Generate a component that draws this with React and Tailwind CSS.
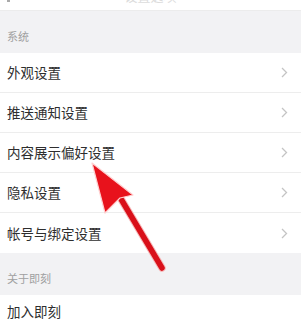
import React from "react";

const rows = ["外观设置", "推送通知设置", "内容展示偏好设置", "隐私设置", "帐号与绑定设置"];

function Chevron() {
  return (
    <svg width="7" height="11" viewBox="0 0 7 11" fill="none">
      <path d="M1 1l4.5 4.5L1 10" stroke="#c4c4c4" strokeWidth="1.3" />
    </svg>
  );
}

function Row({ label, last = false }) {
  return (
    <div
      className={`h-[40px] flex items-center justify-between pl-[7px] pr-[13px] bg-white ${
        last ? "" : "border-b border-[#ededed]"
      }`}
    >
      <span className="text-[13.5px] text-[#2e2e2e]">{label}</span>
      <Chevron />
    </div>
  );
}

function Section({ title }) {
  return (
    <div className="h-[42px] bg-[#f2f2f4] flex items-end pl-[7px] pb-[9px]">
      <span className="text-[11px] text-[#a0a0a0]">{title}</span>
    </div>
  );
}

export default function App() {
  return (
    <div
      className="relative w-[301px] h-[321px] overflow-hidden bg-white"
      style={{ fontFamily: '"Noto Sans CJK SC", "Noto Sans", sans-serif' }}
    >
      <div className="h-[11px] overflow-hidden bg-white border-b border-[#ececec] relative">
        <div className="absolute left-[7px] top-[-6px] w-[3px] h-[8px] bg-[#aaa]" />
        <div className="text-center text-[13px] leading-[16px] text-[#dcdcdc] -mt-[12px]">设置选项</div>
      </div>
      <Section title="系统" />
      {rows.map((r, i) => (
        <Row key={r} label={r} last={i === rows.length - 1} />
      ))}
      <Section title="关于即刻" />
      <div className="bg-white pl-[7px] pt-[3px] pb-[4px]">
        <span className="text-[13.5px] leading-[20px] text-[#2e2e2e]">加入即刻</span>
      </div>

      <svg className="absolute left-0 top-0 pointer-events-none" width="301" height="321">
        <g strokeLinejoin="round">
          <path d="M162 268 L121 199" stroke="#f6b8b8" strokeWidth="7.5" strokeLinecap="round" fill="none" />
          <path d="M162 268 L121 199" stroke="#d9101a" strokeWidth="5.5" strokeLinecap="round" fill="none" />
          <path d="M92 163 L133 195 L120 198 L105 213 Z" fill="#e8121c" stroke="#ffd0d0" strokeWidth="1.2" />
        </g>
      </svg>
    </div>
  );
}
